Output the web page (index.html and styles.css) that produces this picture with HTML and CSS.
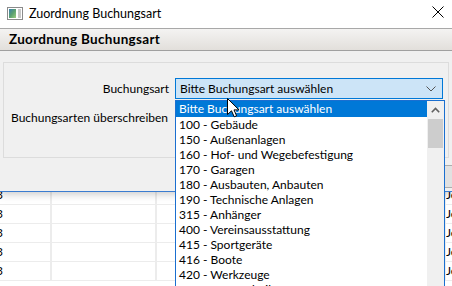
FILE: index.html
```html
<!DOCTYPE html>
<html>
<head>
<meta charset="utf-8">
<link rel="stylesheet" href="styles.css">
</head>
<body>
<div class="screen">
  <div class="dialog">
    <div class="titlebar">
      <svg class="appicon" width="16" height="14" viewBox="0 0 16 14">
        <defs>
          <linearGradient id="g" x1="0" y1="0" x2="1" y2="1">
            <stop offset="0" stop-color="#3a7fb0"/>
            <stop offset="0.5" stop-color="#5aa070"/>
            <stop offset="1" stop-color="#9ccf80"/>
          </linearGradient>
        </defs>
        <rect x="0.5" y="0.5" width="15" height="12" fill="#fff" stroke="#8a8a8a"/>
        <rect x="2" y="2" width="7" height="9" fill="url(#g)"/>
        <rect x="11" y="2" width="3" height="9" fill="#c8c8c8"/>
      </svg>
      <span class="title">Zuordnung Buchungsart</span>
      <svg class="close" width="12" height="12" viewBox="0 0 12 12">
        <path d="M0.5 0.5 L11.5 11.5 M11.5 0.5 L0.5 11.5" stroke="#000" stroke-width="1"/>
      </svg>
    </div>
    <div class="header">Zuordnung Buchungsart</div>
    <div class="content">
      <div class="group">
        <div class="row">
          <span class="label">Buchungsart</span>
          <div class="combo">
            <span>Bitte Buchungsart auswählen</span>
            <svg class="chev" width="10" height="6" viewBox="0 0 10 6"><path d="M0.5 0.5 L5 5 L9.5 0.5" fill="none" stroke="#555"/></svg>
          </div>
        </div>
        <div class="row row2">
          <span class="label2">Buchungsarten überschreiben</span>
        </div>
      </div>
      <div class="footer">
        <div class="btnedge"></div>
      </div>
    </div>
  </div>
  <div class="table">
    <div class="trow"><span class="c1">3</span><span class="c2"></span><span class="c3"></span><span class="c4">Je</span></div>
    <div class="trow"><span class="c1">3</span><span class="c2"></span><span class="c3"></span><span class="c4">Je</span></div>
    <div class="trow"><span class="c1">3</span><span class="c2"></span><span class="c3"></span><span class="c4">Je</span></div>
    <div class="trow"><span class="c1">3</span><span class="c2"></span><span class="c3"></span><span class="c4">Je</span></div>
    <div class="trow"><span class="c1">3</span><span class="c2"></span><span class="c3"></span><span class="c4">Je</span></div>
  </div>

  <div class="dropdown">
    <div class="items">
      <div class="item sel">Bitte Buchungsart auswählen</div>
      <div class="item">100 - Gebäude</div>
      <div class="item">150 - Außenanlagen</div>
      <div class="item">160 - Hof- und Wegebefestigung</div>
      <div class="item">170 - Garagen</div>
      <div class="item">180 - Ausbauten, Anbauten</div>
      <div class="item">190 - Technische Anlagen</div>
      <div class="item">315 - Anhänger</div>
      <div class="item">400 - Vereinsausstattung</div>
      <div class="item">415 - Sportgeräte</div>
      <div class="item">416 - Boote</div>
      <div class="item">420 - Werkzeuge</div>
      <div class="item">440 - Bürotechnik</div>
    </div>
    <div class="scrollbar">
      <div class="sbup"><svg width="9" height="6" viewBox="0 0 9 6"><path d="M0.8 5.2 L4.5 1.5 L8.2 5.2" fill="none" stroke="#606060" stroke-width="1.6"/></svg></div>
      <div class="thumb"></div>
    </div>
  </div>

  <svg class="cursor" width="13" height="20" viewBox="0 0 13 20">
    <path d="M0.5 0.5 L0.5 16.5 L4.5 12.8 L7.2 18.8 L9.6 17.8 L7 11.9 L12 11.9 Z" fill="#fff" stroke="#000" stroke-width="1"/>
  </svg>
</div>
</body>
</html>
```

FILE: styles.css
```css
* { box-sizing: border-box; }
html, body { margin: 0; padding: 0; }
body {
  width: 452px;
  height: 286px;
  overflow: hidden;
  background: #fff;
  font-family: "Segoe UI", Lato, "Noto Sans", sans-serif;
  font-size: 12px;
  color: #000;
}
.screen {
  position: relative;
  width: 452px;
  height: 286px;
  overflow: hidden;
}
.dialog {
  display: flex;
  flex-direction: column;
  height: 192px;
  border-bottom: 1px solid #3a7cd0;
  box-shadow: 0 2px 8px rgba(0,0,0,0.22);
  position: relative;
  z-index: 1;
}
.titlebar {
  height: 29px;
  display: flex;
  align-items: center;
  background: #fff;
  border-bottom: 1px solid #a8a8a8;
  padding-left: 7px;
}
.appicon { margin-top: -1px; }
.title {
  margin-left: 6px;
  font-size: 12.5px;
  margin-top: -2px;
}
.close { margin-left: auto; margin-right: 8px; margin-top: -4px; }
.header {
  height: 22px;
  background: linear-gradient(#f4f3f2, #e2dfdb);
  border-bottom: 1px solid #a0a0a0;
  font-weight: bold;
  font-size: 13.5px;
  letter-spacing: 0.3px;
  padding-left: 9px;
  line-height: 21px;
}
.content {
  flex: 1;
  background: #f0f0f0;
  display: flex;
  flex-direction: column;
  padding: 11px 3px 0 3px;
}
.group {
  height: 96px;
  border: 1px solid #dcdcdc;
  display: flex;
  flex-direction: column;
  padding-top: 15px;
}
.row {
  display: flex;
  align-items: center;
  height: 21px;
}
.label {
  width: 171px;
  text-align: right;
  padding-right: 6px;
}
.combo {
  width: 268px;
  height: 21px;
  background: #cce4f7;
  border: 1px solid #0078d7;
  display: flex;
  align-items: center;
  padding-left: 4px;
  padding-right: 6px;
}
.chev { margin-left: auto; }
.row2 { margin-top: 8px; }
.label2 { padding-left: 7px; }
.footer {
  flex: 1;
  display: flex;
  justify-content: flex-end;
  padding-top: 7px;
}
.btnedge {
  width: 8px;
  height: 23px;
  border: 1px solid #adadad;
  border-right: none;
  background: #e1e1e1;
  margin-right: -3px;
}
.table {
  position: relative;
}
.trow {
  display: flex;
  height: 19px;
  border-bottom: 1px solid #ececec;
  line-height: 18px;
}
.trow:first-child { height: 13px; line-height: 6px; }
.c1 { width: 56px; border-right: 2px solid #ececec; margin-left: -4px; }
.c2 { width: 105px; border-right: 2px solid #ececec; }
.c3 { flex: 1; }
.c4 { width: 7px; overflow: hidden; border-left: 1px solid #ececec; }
.dropdown {
  position: absolute;
  left: 175px;
  top: 100px;
  width: 270px;
  height: 200px;
  background: #fff;
  border: 1px solid #1a6fd0;
  display: flex;
  z-index: 2;
}
.items { flex: 1; }
.item {
  height: 15px;
  line-height: 15px;
  padding-left: 3px;
  white-space: nowrap;
}
.item.sel {
  background: #0078d7;
  color: #fff;
  height: 16px;
  line-height: 16px;
}
.scrollbar {
  width: 17px;
  background: #f0f0f0;
  display: flex;
  flex-direction: column;
}
.sbup {
  height: 17px;
  display: flex;
  align-items: center;
  justify-content: center;
}
.thumb {
  margin: 1px 1px 0 1px;
  height: 29px;
  background: #cdcdcd;
}
.cursor {
  position: absolute;
  left: 227px;
  top: 98px;
  z-index: 3;
}
```
